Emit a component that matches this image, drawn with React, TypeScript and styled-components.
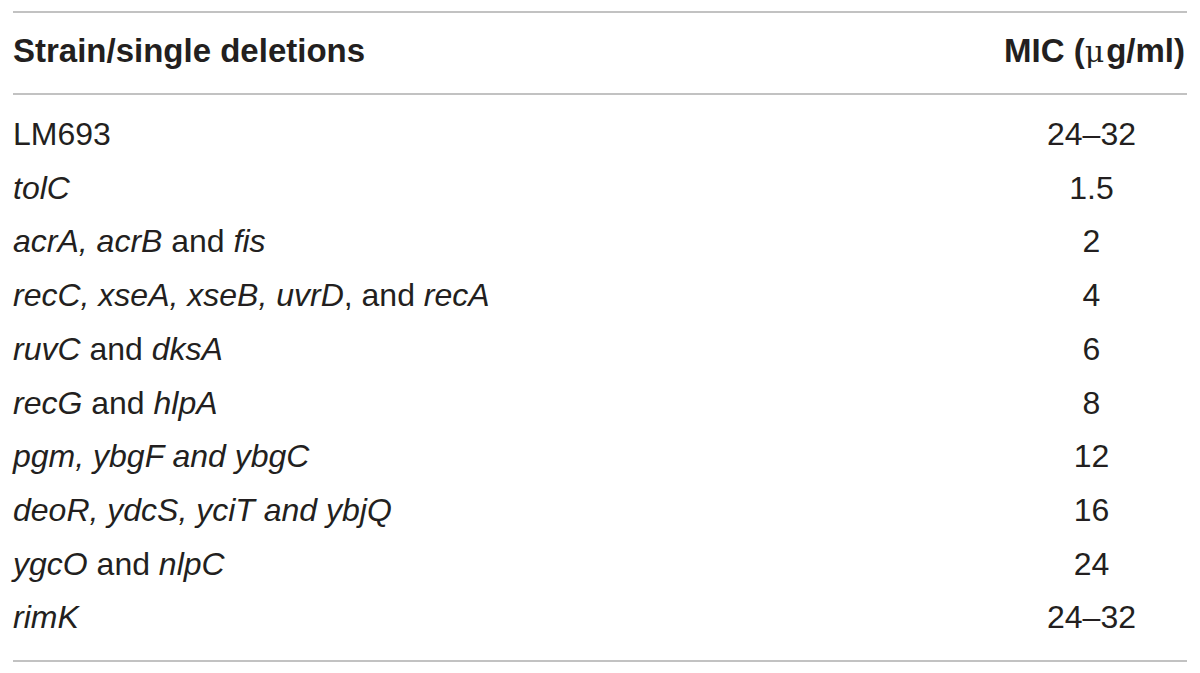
import React from "react";
import styled, { createGlobalStyle } from "styled-components";

const GlobalStyle = createGlobalStyle`
  html, body {
    margin: 0;
    padding: 0;
    background: #ffffff;
  }
  body {
    font-family: "Liberation Sans", Arial, Helvetica, sans-serif;
    color: #231f20;
  }
`;

const Frame = styled.div`
  width: 1200px;
  height: 673px;
  box-sizing: border-box;
  padding: 11px 13px 0 13px;
  background: #ffffff;
`;

const Table = styled.div`
  display: grid;
  grid-template-columns: 1fr auto;
  border-top: 2px solid #c2c2c2;
  border-bottom: 2px solid #c2c2c2;
`;

const HeadCell = styled.div<{ $align?: "left" | "center" }>`
  font-size: 33px;
  font-weight: 700;
  line-height: 76px;
  padding: 0 ${(p) => (p.$align === "center" ? "2px" : "0")} 3px 0;
  text-align: ${(p) => p.$align ?? "left"};
  border-bottom: 2px solid #c2c2c2;
  white-space: nowrap;
`;

const Micro = styled.span`
  font-weight: 400;
  font-family: "DejaVu Serif", "Liberation Serif", serif;
  font-size: 30px;
  letter-spacing: 2px;
`;

const Body = styled.div`
  grid-column: 1 / -1;
  display: grid;
  grid-template-columns: subgrid;
  padding: 13px 0 15px 0;
`;

const Cell = styled.div<{ $align?: "left" | "center" }>`
  font-size: 32px;
  font-weight: 400;
  line-height: 53.7px;
  text-align: ${(p) => p.$align ?? "left"};
  padding-right: ${(p) => (p.$align === "center" ? "8px" : "0")};
  white-space: nowrap;
`;

const Gene = styled.i`
  font-style: italic;
`;

type Row = { name: React.ReactNode; mic: string };

const rows: Row[] = [
  { name: "LM693", mic: "24–32" },
  { name: <Gene>tolC</Gene>, mic: "1.5" },
  {
    name: (
      <>
        <Gene>acrA, acrB</Gene> and <Gene>fis</Gene>
      </>
    ),
    mic: "2",
  },
  {
    name: (
      <>
        <Gene>recC, xseA, xseB, uvrD</Gene>, and <Gene>recA</Gene>
      </>
    ),
    mic: "4",
  },
  {
    name: (
      <>
        <Gene>ruvC</Gene> and <Gene>dksA</Gene>
      </>
    ),
    mic: "6",
  },
  {
    name: (
      <>
        <Gene>recG</Gene> and <Gene>hlpA</Gene>
      </>
    ),
    mic: "8",
  },
  { name: <Gene>pgm, ybgF and ybgC</Gene>, mic: "12" },
  { name: <Gene>deoR, ydcS, yciT and ybjQ</Gene>, mic: "16" },
  {
    name: (
      <>
        <Gene>ygcO</Gene> and <Gene>nlpC</Gene>
      </>
    ),
    mic: "24",
  },
  { name: <Gene>rimK</Gene>, mic: "24–32" },
];

export default function App() {
  return (
    <>
      <GlobalStyle />
      <Frame>
        <Table>
          <HeadCell>Strain/single deletions</HeadCell>
          <HeadCell $align="center">
            MIC (<Micro>μ</Micro>g/ml)
          </HeadCell>
          <Body>
            {rows.map((r, i) => (
              <React.Fragment key={i}>
                <Cell>{r.name}</Cell>
                <Cell $align="center">{r.mic}</Cell>
              </React.Fragment>
            ))}
          </Body>
        </Table>
      </Frame>
    </>
  );
}
